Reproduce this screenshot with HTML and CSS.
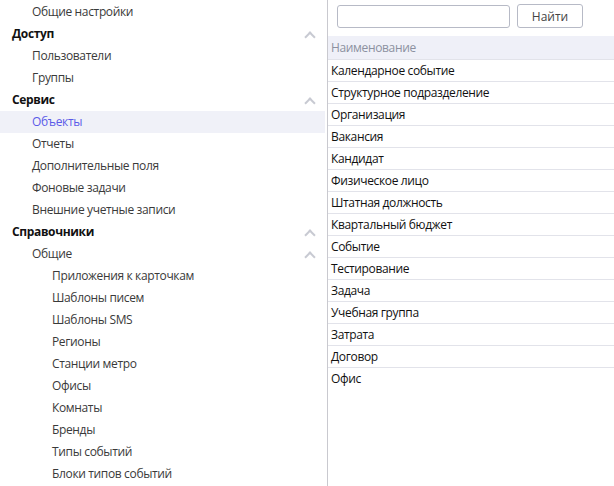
FILE: index.html
```html
<!DOCTYPE html>
<html lang="ru">
<head>
<meta charset="utf-8">
<link rel="stylesheet" href="styles.css">
</head>
<body>
<div class="app">
  <nav class="tree">
    <div class="row l1">Общие настройки</div>
    <div class="row l0">Доступ<span class="chev"></span></div>
    <div class="row l1">Пользователи</div>
    <div class="row l1">Группы</div>
    <div class="row l0">Сервис<span class="chev"></span></div>
    <div class="row l1 sel">Объекты</div>
    <div class="row l1">Отчеты</div>
    <div class="row l1">Дополнительные поля</div>
    <div class="row l1">Фоновые задачи</div>
    <div class="row l1">Внешние учетные записи</div>
    <div class="row l0">Справочники<span class="chev"></span></div>
    <div class="row l1">Общие<span class="chev"></span></div>
    <div class="row l2">Приложения к карточкам</div>
    <div class="row l2">Шаблоны писем</div>
    <div class="row l2">Шаблоны SMS</div>
    <div class="row l2">Регионы</div>
    <div class="row l2">Станции метро</div>
    <div class="row l2">Офисы</div>
    <div class="row l2">Комнаты</div>
    <div class="row l2">Бренды</div>
    <div class="row l2">Типы событий</div>
    <div class="row l2">Блоки типов событий</div>
  </nav>
  <main class="content">
    <div class="search">
      <input class="field" type="text">
      <button class="btn">Найти</button>
    </div>
    <div class="grid">
      <div class="head">Наименование</div>
      <div class="cell">Календарное событие</div>
      <div class="cell">Структурное подразделение</div>
      <div class="cell">Организация</div>
      <div class="cell">Вакансия</div>
      <div class="cell">Кандидат</div>
      <div class="cell">Физическое лицо</div>
      <div class="cell">Штатная должность</div>
      <div class="cell">Квартальный бюджет</div>
      <div class="cell">Событие</div>
      <div class="cell">Тестирование</div>
      <div class="cell">Задача</div>
      <div class="cell">Учебная группа</div>
      <div class="cell">Затрата</div>
      <div class="cell">Договор</div>
      <div class="cell last">Офис</div>
    </div>
  </main>
</div>
</body>
</html>
```
FILE: styles.css
```css
* { box-sizing: border-box; }
html, body { margin: 0; padding: 0; background: #fff; }
body {
  font-family: "Open Sans", "Noto Sans", sans-serif;
  font-size: 12px;
  letter-spacing: -0.35px;
  color: #222;
  width: 614px;
  height: 486px;
  overflow: hidden;
}
.app {
  display: flex;
  height: 486px;
}
.tree {
  width: 328px;
  flex: none;
  border-right: 1px solid #c9c9cf;
  padding-top: 1px;
}
.row {
  height: 22px;
  line-height: 22px;
  display: flex;
  align-items: center;
  color: #3a3a3a;
  white-space: nowrap;
}
.l0 { padding-left: 12px; font-weight: 700; color: #111; }
.l1 { padding-left: 32px; }
.l2 { padding-left: 52px; }
.sel { background: #f0f1f8; color: #5b5be8; margin-right: 2px; }
.chev {
  margin-left: auto;
  margin-right: 13px;
  width: 8px;
  height: 8px;
  border-left: 2px solid #c8cad2;
  border-top: 2px solid #c8cad2;
  transform: rotate(45deg);
  margin-top: 6px;
}
.content {
  flex: 1;
  min-width: 0;
}
.search {
  display: flex;
  gap: 7px;
  padding: 5px 0 0 9px;
  height: 36px;
}
.field {
  width: 173px;
  height: 23px;
  border: 1px solid #b7bac6;
  border-radius: 3px;
  margin: 0;
  font: inherit;
}
.btn {
  width: 66px;
  height: 24px;
  margin-top: -1px;
  border: 1px solid #b7bac6;
  border-radius: 3px;
  background: #fff;
  font: inherit;
  color: #444;
  padding: 0;
}
.head {
  height: 24px;
  line-height: 23px;
  background: #eff0f8;
  color: #8c90a0;
  padding-left: 3px;
  border-bottom: 1px solid #e2e3ea;
}
.cell {
  height: 22px;
  line-height: 22px;
  padding-left: 3px;
  border-bottom: 1px solid #e2e3ea;
  color: #111;
}
.cell.last { border-bottom: none; }
```
